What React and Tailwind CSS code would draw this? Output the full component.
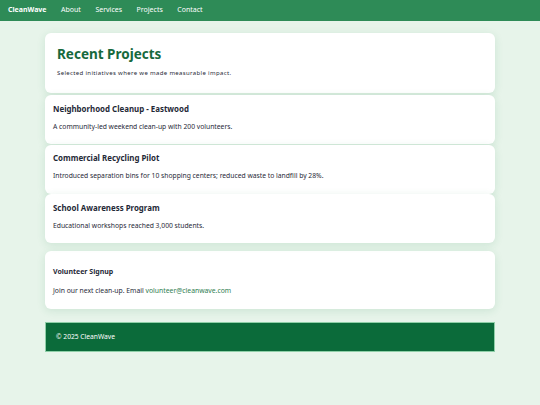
const projects = [
  {
    title: "Neighborhood Cleanup - Eastwood",
    desc: "A community-led weekend clean-up with 200 volunteers.",
  },
  {
    title: "Commercial Recycling Pilot",
    desc: "Introduced separation bins for 10 shopping centers; reduced waste to landfill by 28%.",
  },
  {
    title: "School Awareness Program",
    desc: "Educational workshops reached 3,000 students.",
  },
];

export default function App() {
  return (
    <div className="min-h-[405px] bg-[#e7f4ea] font-['Noto_Sans',sans-serif] text-[#1f2937]">
      {/* Top nav */}
      <nav className="h-[21px] bg-[#2e8b57] flex items-center px-[8px] gap-[14.5px] text-[7px] text-white">
        <span className="font-bold">CleanWave</span>
        <a href="#">About</a>
        <a href="#">Services</a>
        <a href="#">Projects</a>
        <a href="#">Contact</a>
      </nav>

      <main className="w-[450px] mx-auto pt-[12px]">
        {/* Header card */}
        <section className="bg-white rounded-[6px] shadow-[0_2px_8px_rgba(46,139,87,0.14)] px-[12px] pt-[13px] pb-[15px]">
          <h1 className="text-[13.5px] leading-[17px] font-bold text-[#17693d]">
            Recent Projects
          </h1>
          <p className="mt-[5px] text-[6px] leading-[10px] tracking-[0.35px]">
            Selected initiatives where we made measurable impact.
          </p>
        </section>

        {/* Project list */}
        <div className="flex flex-col gap-[0.5px] mt-[2px]">
          {projects.map((p) => (
            <article
              key={p.title}
              className="bg-white rounded-[6px] shadow-[0_2px_8px_rgba(46,139,87,0.14)] px-[8px] pt-[8.5px] pb-[12.5px]"
            >
              <h3 className="text-[7.9px] leading-[10px] font-bold">{p.title}</h3>
              <p className="mt-[8px] text-[6.75px] leading-[10px]">{p.desc}</p>
            </article>
          ))}
        </div>

        {/* Volunteer */}
        <section className="mt-[8px] bg-white rounded-[6px] shadow-[0_2px_8px_rgba(46,139,87,0.14)] px-[8px] pt-[16px] pb-[13px]">
          <h4 className="text-[7px] leading-[10px] font-bold">Volunteer Signup</h4>
          <p className="mt-[9px] text-[6.8px] leading-[10px]">
            Join our next clean-up. Email{" "}
            <a href="#" className="text-[#2e7d4f]">
              volunteer@cleanwave.com
            </a>
          </p>
        </section>

        <footer className="mt-[13px] h-[30px] bg-[#0b6b3a] border border-[#8fcfa8] flex items-center px-[10px] text-[6.7px] text-white">
          © 2025 CleanWave
        </footer>
      </main>
    </div>
  );
}
